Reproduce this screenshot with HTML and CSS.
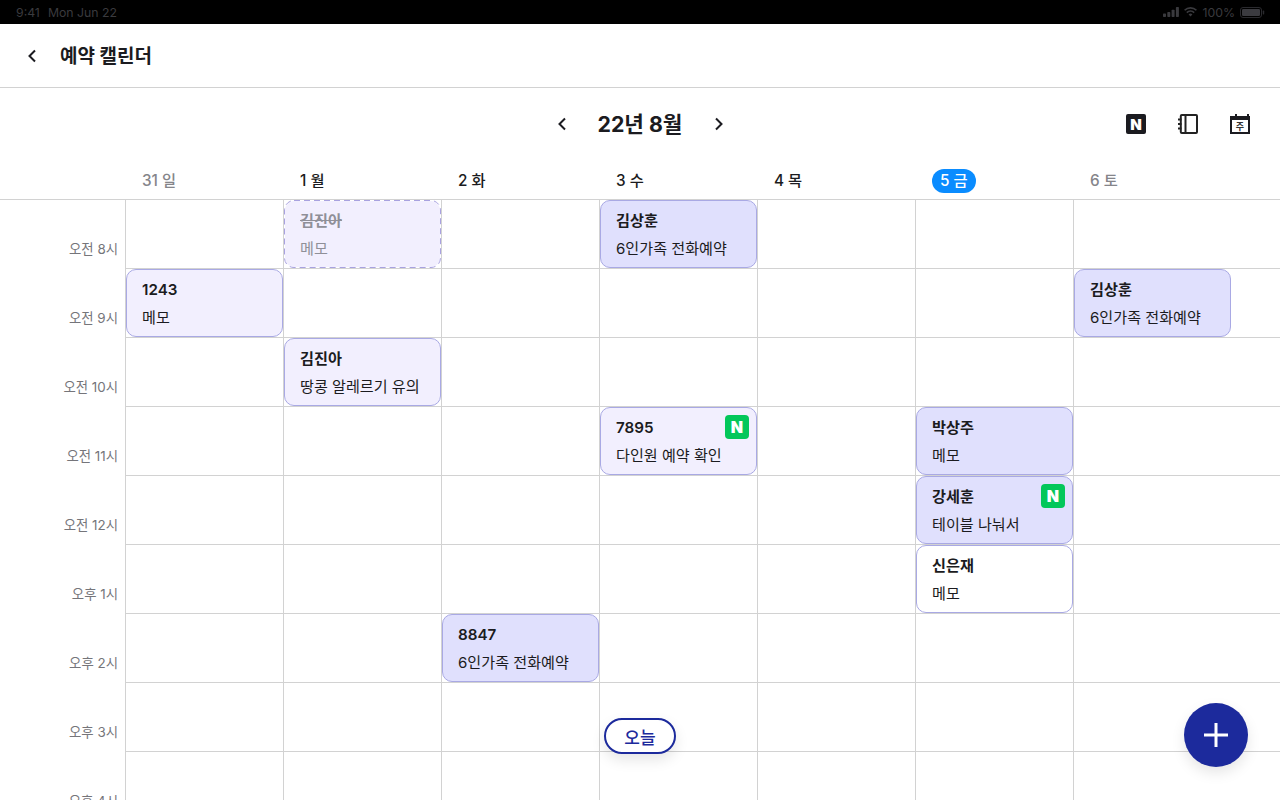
FILE: index.html
```html
<!DOCTYPE html>
<html lang="ko">
<head>
<meta charset="utf-8">
<title>예약 캘린더</title>
<link rel="stylesheet" href="styles.css">
</head>
<body>
<div class="app">
  <div class="status">
    <div class="status-left"><span>9:41</span><span>Mon Jun 22</span></div>
    <div class="status-right">
      <svg class="sig" width="16" height="10" viewBox="0 0 16 10"><rect x="0" y="6.5" width="3" height="3.5" rx=".7"/><rect x="4.300" y="5" width="3" height="5" rx=".7"/><rect x="8.600" y="2.800" width="3" height="7.200" rx=".7"/><rect x="12.900" y="0" width="3" height="10" rx=".7"/></svg>
      <svg class="wifi" width="13" height="10" viewBox="0 0 15 11"><path d="M7.500 10.800 5.300 8.300a3.200 3.200 0 0 1 4.400 0zM3.900 6.900l-1.300-1.400a7.200 7.200 0 0 1 9.800 0l-1.300 1.400a5.300 5.300 0 0 0-7.200 0zM1.400 4.200 0 2.800a11 11 0 0 1 15 0l-1.400 1.400a9 9 0 0 0-12.200 0z"/></svg>
      <span>100%</span>
      <svg class="batt" width="25" height="11" viewBox="0 0 25 11"><rect x=".5" y=".5" width="21" height="10" rx="2.500" fill="none" stroke="#2a2a2e"/><rect x="2" y="2" width="18" height="7" rx="1.200" fill="#3b3b40"/><rect x="22.800" y="3.600" width="1.400" height="3.800" rx=".6" fill="#2a2a2e"/></svg>
    </div>
  </div>

  <header class="topbar">
    <svg class="chev" width="24" height="24" viewBox="0 0 24 24"><path d="M15 6.500 9.500 12l5.500 5.500"/></svg>
    <h1 class="page-title">예약 캘린더</h1>
  </header>

  <div class="toolbar">
    <div class="toolbar-side"></div>
    <div class="month-nav">
      <svg class="chev" width="24" height="24" viewBox="0 0 24 24"><path d="M15 6.500 9.500 12l5.500 5.500"/></svg>
      <div class="month">22년 8월</div>
      <svg class="chev" width="24" height="24" viewBox="0 0 24 24"><path d="M9 6.500 14.500 12 9 17.500"/></svg>
    </div>
    <div class="toolbar-side tools">
      <span class="tool-n">N</span>
      <svg class="tool" width="20" height="20" viewBox="0 0 20 20"><rect x="2.800" y="1" width="16.200" height="18" rx="1" fill="none" stroke="#222" stroke-width="2"/><path d="M7.500 1v18M0 5.500h3.500M0 10h3.500M0 14.500h3.500" fill="none" stroke="#222" stroke-width="2"/></svg>
      <div class="tool-cal"><span>주</span></div>
    </div>
  </div>

  <div class="weekhead">
    <div></div>
    <div class="day muted">31 일</div>
    <div class="day">1 월</div>
    <div class="day">2 화</div>
    <div class="day">3 수</div>
    <div class="day">4 목</div>
    <div class="day"><span class="today-pill">5 금</span></div>
    <div class="day muted">6 토</div>
  </div>

  <div class="grid">
    <div class="row">
      <div class="hour">오전 8시</div>
      <div class="cell"></div>
      <div class="cell"><div class="event light dashed"><svg class="dash-line" width="157" height="68" viewBox="0 0 157 68"><rect x=".5" y=".5" width="156" height="67" rx="9.500"/></svg><div class="ev-title">김진아</div><div class="ev-memo">메모</div></div></div>
      <div class="cell"></div>
      <div class="cell"><div class="event strong"><div class="ev-title">김상훈</div><div class="ev-memo">6인가족 전화예약</div></div></div>
      <div class="cell"></div><div class="cell"></div><div class="cell"></div>
    </div>
    <div class="row">
      <div class="hour">오전 9시</div>
      <div class="cell"><div class="event light"><div class="ev-title">1243</div><div class="ev-memo">메모</div></div></div>
      <div class="cell"></div><div class="cell"></div><div class="cell"></div><div class="cell"></div><div class="cell"></div>
      <div class="cell"><div class="event strong"><div class="ev-title">김상훈</div><div class="ev-memo">6인가족 전화예약</div></div></div>
    </div>
    <div class="row">
      <div class="hour">오전 10시</div>
      <div class="cell"></div>
      <div class="cell"><div class="event light"><div class="ev-title">김진아</div><div class="ev-memo">땅콩 알레르기 유의</div></div></div>
      <div class="cell"></div><div class="cell"></div><div class="cell"></div><div class="cell"></div><div class="cell"></div>
    </div>
    <div class="row">
      <div class="hour">오전 11시</div>
      <div class="cell"></div><div class="cell"></div><div class="cell"></div>
      <div class="cell"><div class="event light"><div class="ev-title">7895</div><div class="ev-memo">다인원 예약 확인</div><span class="n-badge">N</span></div></div>
      <div class="cell"></div>
      <div class="cell"><div class="event strong"><div class="ev-title">박상주</div><div class="ev-memo">메모</div></div></div>
      <div class="cell"></div>
    </div>
    <div class="row">
      <div class="hour">오전 12시</div>
      <div class="cell"></div><div class="cell"></div><div class="cell"></div><div class="cell"></div><div class="cell"></div>
      <div class="cell"><div class="event strong"><div class="ev-title">강세훈</div><div class="ev-memo">테이블 나눠서</div><span class="n-badge">N</span></div></div>
      <div class="cell"></div>
    </div>
    <div class="row">
      <div class="hour">오후 1시</div>
      <div class="cell"></div><div class="cell"></div><div class="cell"></div><div class="cell"></div><div class="cell"></div>
      <div class="cell"><div class="event plain"><div class="ev-title">신은재</div><div class="ev-memo">메모</div></div></div>
      <div class="cell"></div>
    </div>
    <div class="row">
      <div class="hour">오후 2시</div>
      <div class="cell"></div><div class="cell"></div>
      <div class="cell"><div class="event strong"><div class="ev-title">8847</div><div class="ev-memo">6인가족 전화예약</div></div></div>
      <div class="cell"></div><div class="cell"></div><div class="cell"></div><div class="cell"></div>
    </div>
    <div class="row">
      <div class="hour">오후 3시</div>
      <div class="cell"></div><div class="cell"></div><div class="cell"></div><div class="cell"></div><div class="cell"></div><div class="cell"></div><div class="cell"></div>
    </div>
    <div class="row">
      <div class="hour">오후 4시</div>
      <div class="cell"></div><div class="cell"></div><div class="cell"></div><div class="cell"></div><div class="cell"></div><div class="cell"></div><div class="cell"></div>
    </div>
  </div>

  <button class="today-btn">오늘</button>
  <button class="fab"><svg width="24" height="24" viewBox="0 0 24 24"><path d="M12 0v24M0 12h24" stroke="#fff" stroke-width="3" fill="none"/></svg></button>
</div>
</body>
</html>
```
FILE: styles.css
```css
* { box-sizing: border-box; }
html, body { margin: 0; padding: 0; height: 800px; overflow: hidden; background: #fff; }
body { font-family: Inter, "Noto Sans CJK KR", sans-serif; color: #1b1b20; }
.app { position: relative; width: 1280px; height: 800px; overflow: hidden; background: #fff; }

.status { height: 24px; background: #000; color: #3a3a3e; font-size: 12.300px; display: flex; justify-content: space-between; align-items: center; padding: 0 15px 0 16px; }
.status-left { display: flex; gap: 8px; }
.status-right { display: flex; align-items: center; gap: 5px; }
.sig, .wifi { fill: #3a3a3e; }

.topbar { height: 64px; border-bottom: 1px solid #d2d2d2; display: flex; align-items: center; padding-left: 20px; gap: 16px; }
.chev { fill: none; stroke: #1b1b20; stroke-width: 2; flex: none; }
.page-title { margin: 2px 0 0; font-size: 19px; font-weight: 700; line-height: 24px; }

.toolbar { height: 72px; display: grid; grid-template-columns: 1fr auto 1fr; align-items: center; }
.month-nav { display: flex; align-items: center; gap: 12px; }
.month { font-size: 21.300px; font-weight: 700; line-height: 30px; width: 109px; text-align: center; }
.tools { display: flex; justify-content: flex-end; align-items: center; gap: 32px; padding-right: 30px; }
.tool-n { width: 20px; height: 20px; border-radius: 2px; background: #1b1b20; color: #fff; font-size: 15px; font-weight: 900; display: flex; align-items: center; justify-content: center; }
.tool { display: block; }
.tool-cal { position: relative; width: 20px; height: 18px; margin-top: 2px; border: 2px solid #1b1b20; border-top-width: 4px; font-size: 9px; font-weight: 700; color: #333; display: flex; align-items: center; justify-content: center; line-height: 1; }
.tool-cal::before { content: ""; position: absolute; top: -6px; left: 3px; width: 10px; height: 2px; border-left: 2px solid #1b1b20; border-right: 2px solid #1b1b20; }

.weekhead { height: 40px; padding-top: 2px; border-bottom: 1px solid #d2d2d2; display: grid; grid-template-columns: 125px repeat(6, 158px) 1fr; align-items: center; }
.day { padding-left: 17px; font-size: 15.300px; font-weight: 500; line-height: 24px; color: #1b1b20; }
.day.muted { color: #85858a; }
.today-pill { display: inline-block; height: 24px; padding: 0 8px; border-radius: 12px; background: #0a8cff; color: #fff; }

.row { display: grid; grid-template-columns: 125px repeat(6, 158px) 1fr; height: 69px; }
.hour { font-size: 13.400px; line-height: 16px; color: #75757a; text-align: right; padding: 41px 7px 0 0; }
.cell { border-left: 1px solid #d2d2d2; border-bottom: 1px solid #d2d2d2; height: 69px; }

.event { position: relative; width: 157px; height: 68px; border: 1px solid #a9a9e4; border-radius: 10px; padding: 9px 15px 0; color: #1b1b20; }
.event.light { background: #f2effe; }
.event.strong { background: #e0e0fd; }
.event.plain { background: #fff; }
.event.dashed { border-color: transparent; color: #8f8f98; background-clip: padding-box; }
.dash-line { position: absolute; left: -1px; top: -1px; fill: none; stroke: #a9a2e0; stroke-width: 1; stroke-dasharray: 6 4; }
.ev-title { font-size: 15.200px; font-weight: 600; line-height: 22px; margin-bottom: 6px; }
.dashed .ev-title { text-decoration: line-through; }
.ev-memo { font-size: 15.100px; font-weight: 400; line-height: 22px; white-space: nowrap; }
.n-badge { position: absolute; top: 7px; right: 7px; width: 24px; height: 24px; border-radius: 4px; background: #03c75a; color: #fff; font-size: 16px; font-weight: 900; display: flex; align-items: center; justify-content: center; }

.today-btn { position: absolute; left: 604px; top: 718px; width: 72px; height: 36px; border: 2px solid #1c2a9c; border-radius: 18px; background: #fff; color: #1c2a9c; font: 500 17px Inter, "Noto Sans CJK KR", sans-serif; padding: 0; box-shadow: 0 6px 14px rgba(0, 0, 0, .1); }
.fab { position: absolute; left: 1184px; top: 703px; width: 64px; height: 64px; border: 0; border-radius: 50%; background: #1c2a9c; padding: 0; display: flex; align-items: center; justify-content: center; box-shadow: 0 6px 14px rgba(0, 0, 0, .1); }
```
